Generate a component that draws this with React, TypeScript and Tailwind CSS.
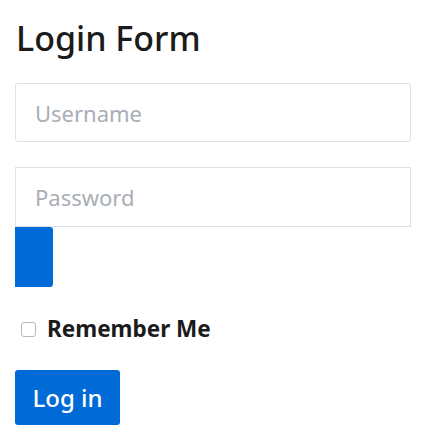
export default function App() {
  return (
    <div className="min-h-screen bg-white px-[15px] pt-[14px] font-['Noto_Sans',sans-serif] text-[#1b1b1b]">
      <h1 className="text-[34px] leading-[48px] font-medium ml-px">Login Form</h1>
      <form className="mt-[21px] flex flex-col">
        <input
          type="text"
          placeholder="Username"
          className="h-[59px] w-[396px] rounded-[3px] border border-[#e1e1e1] px-[19px] text-[22px] placeholder:text-[#a9aeb6] outline-none"
        />
        <input
          type="password"
          placeholder="Password"
          className="mt-[25px] h-[60px] w-[396px] border border-[#e1e1e1] px-[19px] text-[22px] placeholder:text-[#a9aeb6] outline-none"
        />
        <button type="button" className="h-[60px] w-[38px] rounded-r-[3px] bg-[#006bd6]"></button>
        <label className="mt-[27px] flex items-center gap-[11px] pl-[6px] text-[22.5px] font-bold leading-[30px]">
          <input type="checkbox" className="h-[15px] w-[15px] rounded-[3px] border border-[#b7b7b7] appearance-none" />
          Remember Me
        </label>
        <button
          type="button"
          className="mt-[26px] h-[55px] w-[105px] rounded-[3px] bg-[#006bd6] text-[24px] font-medium text-white"
        >
          Log in
        </button>
      </form>
    </div>
  );
}
